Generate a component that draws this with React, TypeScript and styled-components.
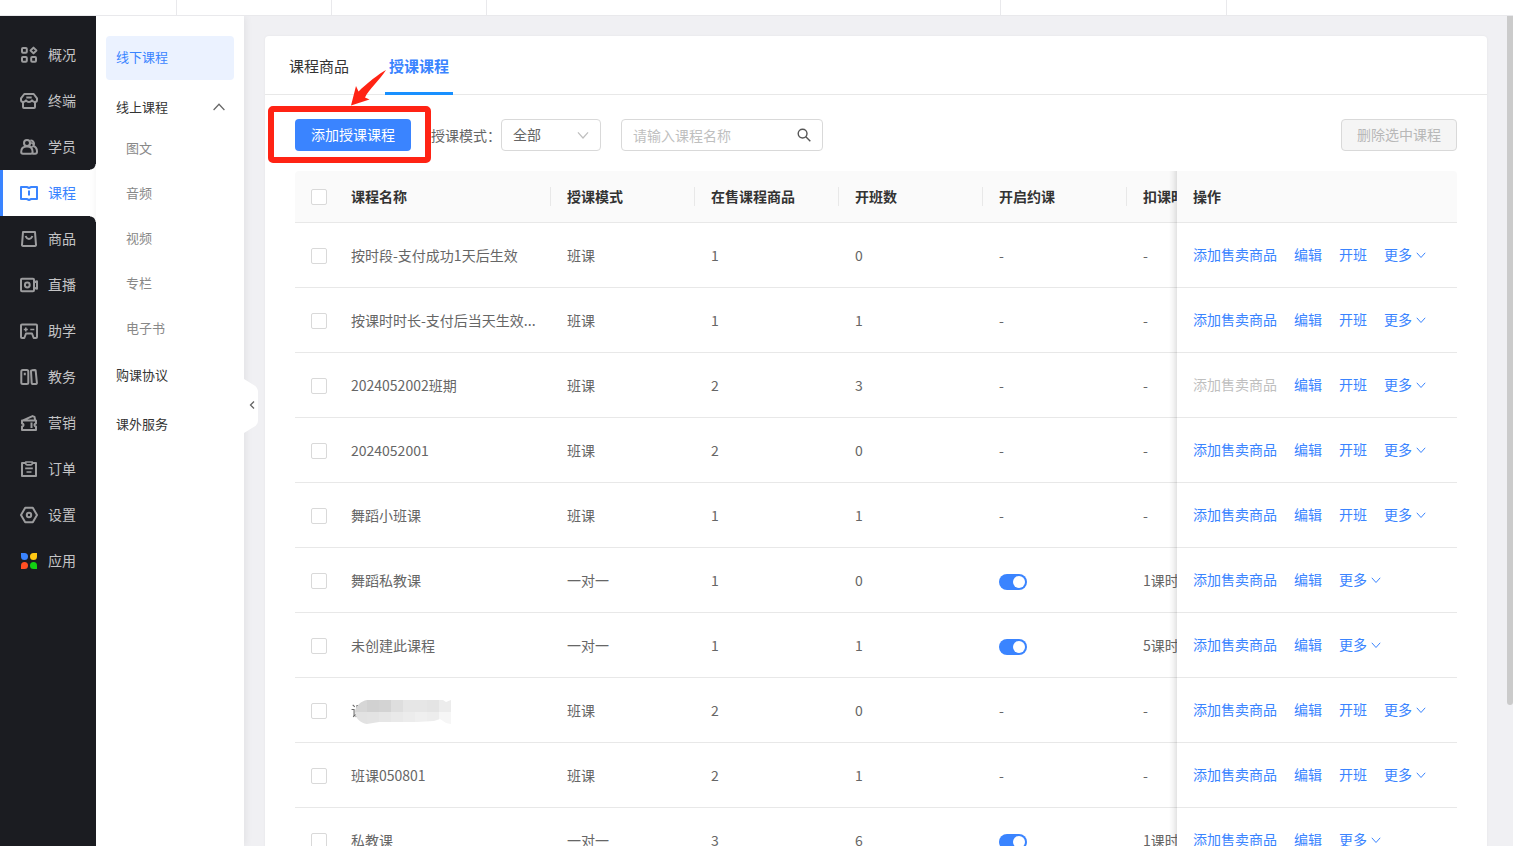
import React, { useState } from "react";
import styled, { createGlobalStyle, css } from "styled-components";

const BLUE = "#3a84ff";

const GlobalStyle = createGlobalStyle`
  *, *::before, *::after { box-sizing: border-box; }
  body {
    margin: 0;
    background: #f0f0f3;
    color: #666;
    font: 14px/22px "Noto Sans CJK SC", "Noto Sans", sans-serif;
  }
  button, input, select { font: inherit; margin: 0; }
  a { color: inherit; text-decoration: none; }
`;

const Page = styled.div`
  display: flex;
  flex-direction: column;
  height: 100vh;
  overflow: hidden;
`;

const TopStrip = styled.div`
  display: flex;
  flex: none;
  height: 16px;
  background: #fff;
  border-bottom: 1px solid #e9e9ec;
`;

const TopCell = styled.div<{ $w: number }>`
  flex: 0 1 ${(p) => p.$w}px;
  border-right: 1px solid #e9e9ec;
`;

const Body = styled.div`
  display: flex;
  flex: 1;
  min-height: 0;
  overflow: hidden;
`;

const Rail = styled.nav`
  flex: none;
  width: 96px;
  padding-top: 16px;
  background: #1b1c21;
`;

const corner = css`
  content: "";
  position: absolute;
  right: 0;
  width: 6px;
  height: 6px;
`;

const RailLink = styled.a<{ $active?: boolean }>`
  position: relative;
  display: flex;
  align-items: center;
  gap: 10px;
  height: 46px;
  padding-left: 20px;
  color: #c4c4c6;

  ${(p) =>
    p.$active &&
    css`
      padding-left: 17px;
      border-left: 3px solid ${BLUE};
      background: #fff;
      color: ${BLUE};
      &::before {
        ${corner}
        top: -6px;
        background: radial-gradient(circle at 0 0, transparent 5px, #fff 6px);
      }
      &::after {
        ${corner}
        bottom: -6px;
        background: radial-gradient(circle at 0 100%, transparent 5px, #fff 6px);
      }
    `}
`;

const RailLabel = styled.span`
  padding-bottom: 2px;
`;

const RailIcon = styled.svg<{ $active?: boolean }>`
  flex: none;
  width: 18px;
  height: 18px;
  fill: none;
  stroke: ${(p) => (p.$active ? BLUE : "#9c9c9e")};
  stroke-width: 2;
  stroke-linejoin: round;
`;

const SubMenu = styled.nav`
  position: relative;
  z-index: 1;
  flex: none;
  width: 148px;
  padding: 20px 10px;
  background: #fff;
  font-size: 13px;
  box-shadow: 1px 0 8px rgba(0, 0, 0, 0.07);
`;

const SubLink = styled.a<{ $active?: boolean }>`
  display: flex;
  align-items: center;
  height: ${(p) => (p.$active ? 44 : 49)}px;
  padding: 0 10px 2px;
  border-radius: 4px;
  color: ${(p) => (p.$active ? BLUE : "#333")};
  background: ${(p) => (p.$active ? "#ebf2ff" : "none")};
`;

const SubGroup = styled.button`
  display: flex;
  align-items: center;
  justify-content: space-between;
  width: 100%;
  height: 46px;
  padding: 8px 9px 0 10px;
  border: 0;
  background: none;
  color: #333;
`;

const SubChild = styled.a`
  display: flex;
  align-items: center;
  height: 45px;
  padding: 0 0 2px 20px;
  color: #888;
`;

const Collapse = styled.button`
  position: absolute;
  top: 363px;
  right: -14px;
  width: 14px;
  height: 54px;
  padding: 0;
  border: 0;
  background: none;
  svg {
    display: block;
  }
`;

const Main = styled.main`
  flex: 1;
  min-width: 0;
  padding: 20px 20px 0 21px;
  overflow: hidden;
`;

const Card = styled.section`
  background: #fff;
  border-radius: 4px;
  box-shadow: 0 0 3px rgba(0, 0, 0, 0.05);
`;

const Tabs = styled.div`
  display: flex;
  gap: 32px;
  padding: 0 20px;
  border-bottom: 1px solid #e8e8e8;
`;

const Tab = styled.button<{ $active?: boolean }>`
  height: 59px;
  margin-bottom: -1px;
  padding: 3px 4px 0;
  border: 0;
  border-bottom: 3px solid ${(p) => (p.$active ? "#1890ff" : "transparent")};
  background: none;
  color: ${(p) => (p.$active ? BLUE : "#333")};
  font-size: 15px;
  font-weight: ${(p) => (p.$active ? 700 : 400)};
`;

const Toolbar = styled.div`
  display: flex;
  align-items: center;
  padding: 24px 30px 20px;
`;

const Highlight = styled.div`
  position: relative;
  margin-right: 20px;
  &::after {
    content: "";
    position: absolute;
    inset: -13px -20px -12px -27px;
    border: 6px solid #ff2314;
    border-radius: 5px;
    pointer-events: none;
  }
`;

const Arrow = styled.svg`
  position: absolute;
  left: 55px;
  top: -50px;
  width: 38px;
  height: 38px;
  pointer-events: none;
`;

const PrimaryButton = styled.button`
  display: block;
  width: 116px;
  height: 32px;
  padding: 0 0 2px;
  border: 0;
  border-radius: 4px;
  background: ${BLUE};
  color: #fff;
`;

const PlainButton = styled.button`
  width: 116px;
  height: 32px;
  margin-left: auto;
  padding: 0 0 2px;
  border: 1px solid #d9d9d9;
  border-radius: 4px;
  background: #f5f5f5;
  color: #b8b8b8;
`;

const SelectBox = styled.span`
  display: grid;
  align-items: center;
  width: 100px;
  margin-right: 20px;
  > * {
    grid-area: 1 / 1;
  }
  svg {
    justify-self: end;
    margin-right: 12px;
    pointer-events: none;
  }
`;

const Select = styled.select`
  appearance: none;
  width: 100%;
  height: 32px;
  padding: 0 11px 2px;
  border: 1px solid #d9d9d9;
  border-radius: 4px;
  background: #fff;
  color: #666;
`;

const Search = styled.div`
  display: flex;
  align-items: center;
  width: 202px;
  height: 32px;
  padding: 0 11px;
  border: 1px solid #d9d9d9;
  border-radius: 4px;
`;

const SearchInput = styled.input`
  flex: 1;
  min-width: 0;
  padding: 0;
  border: 0;
  outline: 0;
  background: none;
  color: #666;
  &::placeholder {
    color: #bfbfbf;
  }
`;

const IconButton = styled.button`
  display: flex;
  padding: 0;
  border: 0;
  background: none;
`;

const TableWrap = styled.div`
  margin: 0 30px;
  overflow-x: auto;
  scrollbar-width: none;
  border-radius: 4px 4px 0 0;
`;

const Table = styled.table`
  width: 100%;
  min-width: 1256px;
  table-layout: fixed;
  border-collapse: separate;
  border-spacing: 0;
`;

const Col = styled.col<{ $w: number }>`
  width: ${(p) => p.$w}px;
`;

const sticky = css`
  position: sticky;
  right: 0;
  &::before {
    content: "";
    position: absolute;
    top: 0;
    bottom: -1px;
    left: -8px;
    width: 8px;
    background: linear-gradient(to left, rgba(0, 0, 0, 0.11), rgba(0, 0, 0, 0.04) 50%, transparent);
  }
`;

const Th = styled.th<{ $rule?: boolean; $fixed?: boolean }>`
  height: 52px;
  padding: 0 16px 2px;
  border-bottom: 1px solid #e8e8e8;
  background: ${(p) =>
    p.$rule
      ? "linear-gradient(#e8e8e8, #e8e8e8) right center / 1px 19px no-repeat #fafafa"
      : "#fafafa"};
  color: #333;
  font-weight: 700;
  text-align: left;
  white-space: nowrap;
  ${(p) => p.$fixed && sticky}
`;

const Td = styled.td<{ $fixed?: boolean }>`
  height: 65px;
  padding: ${(p) => (p.$fixed ? "0 16px 2px" : "0 16px")};
  border-bottom: 1px solid #e8e8e8;
  background: #fff;
  white-space: nowrap;
  ${(p) => p.$fixed && sticky}
`;

const Check = styled.input`
  display: block;
  appearance: none;
  width: 16px;
  height: 16px;
  margin-top: 2px !important;
  border: 1px solid #d9d9d9;
  border-radius: 2px;
  background: #fff;
  &:checked {
    border-color: ${BLUE};
    background: ${BLUE};
  }
`;

const Switch = styled.input`
  display: block;
  appearance: none;
  width: 28px;
  height: 16px;
  margin-top: 3px !important;
  padding: 2px;
  border-radius: 8px;
  background: #bfbfbf;
  &::before {
    content: "";
    display: block;
    width: 12px;
    height: 12px;
    border-radius: 6px;
    background: #fff;
  }
  &:checked {
    background: ${BLUE};
  }
  &:checked::before {
    margin-left: auto;
  }
`;

const Actions = styled.div`
  display: flex;
  gap: 17px;
`;

const ActionLink = styled.a`
  display: flex;
  align-items: center;
  gap: 4px;
  color: ${BLUE};
  svg {
    margin-top: 2px;
  }
`;

const DisabledAction = styled.button`
  padding: 0;
  border: 0;
  background: none;
  color: #bfbfbf;
`;

const Redacted = styled.span`
  position: relative;
  svg {
    position: absolute;
    left: 4px;
    top: 0;
  }
`;

const ScrollTrack = styled.div`
  flex: none;
  width: 6px;
`;

const ScrollThumb = styled.div`
  height: 83%;
  border-radius: 0 0 3px 3px;
  background: #cbcbcb;
`;

type RailItem = { label: string; icon: React.ReactNode };

const RAIL: RailItem[] = [
  {
    label: "概况",
    icon: (
      <>
        <rect x="2" y="2" width="4.8" height="4.8" rx="1" />
        <rect x="2" y="11" width="4.8" height="4.8" rx="1" />
        <rect x="11.2" y="11" width="4.8" height="4.8" rx="1" />
        <path d="M13.5 1.6 16.4 4.5 13.5 7.4 10.6 4.5z" />
      </>
    ),
  },
  {
    label: "终端",
    icon: (
      <>
        <path d="M4.3 2h9.4L17 6.4V8a2 2 0 0 1-2 2c-1.6 0-2.3-.8-3-1.8-.7 1-1.6 1.8-3 1.8s-2.3-.8-3-1.8C5.3 9.2 4.6 10 3 10a2 2 0 0 1-2-2V6.4z" />
        <path d="M3 10v5a1 1 0 0 0 1 1h10a1 1 0 0 0 1-1v-5M6.300 5.500h5.400" />
      </>
    ),
  },
  {
    label: "学员",
    icon: (
      <>
        <circle cx="7" cy="5" r="3" />
        <path d="M10.3 2.700a3 3 0 0 1 2.700 5.100M1.200 14c0-3.500 2.200-5.400 5.800-5.400s5.600 1.900 5.600 5.400c0 1.200-.6 1.800-1.700 1.800H2.900c-1.100 0-1.700-.6-1.700-1.800zM13 7.900c2.600.5 4 2.700 4 5.700 0 1.500-.6 2.200-1.900 2.200h-2.600" />
        <circle cx="11.5" cy="7" r="2" strokeWidth="1.500" />
      </>
    ),
  },
  {
    label: "课程",
    icon: (
      <>
        <path d="M1 3h5.800L9 4l2.200-1H17v12h-5.800L9 16l-2.200-1H1z" />
        <path d="M9 6.500v5" />
      </>
    ),
  },
  {
    label: "商品",
    icon: (
      <>
        <path d="M3 2h12l1 12.800a1 1 0 0 1-1 1.200H3a1 1 0 0 1-1-1.200z" />
        <path d="M5.600 6c.8 2 2 2.900 3.400 2.900s2.600-.9 3.400-2.900" />
      </>
    ),
  },
  {
    label: "直播",
    icon: (
      <>
        <rect x="1" y="2.800" width="13" height="12.400" rx="1" />
        <circle cx="7.300" cy="9" r="2.400" />
        <path d="M14 6.300 17 5.300v7.400l-3-1" />
      </>
    ),
  },
  {
    label: "助学",
    icon: (
      <>
        <path d="M2 2.500h14a1 1 0 0 1 1 1V15a1 1 0 0 1-1 1h-2.300L12 11.500H6L4.300 16H2a1 1 0 0 1-1-1V3.500a1 1 0 0 1 1-1z" />
        <path d="M3.800 7.500h4M5.800 5.500v4M10.300 7.500h4" strokeWidth="1.600" />
      </>
    ),
  },
  {
    label: "教务",
    icon: (
      <>
        <rect x="1.300" y="2" width="7" height="14" rx="1.500" />
        <path d="M4.800 4.800v2.500M12 2.200l2.600-.3a1 1 0 0 1 1.100.9l1.200 12a1 1 0 0 1-.9 1.100l-3.200.2a1 1 0 0 1-1.100-1L11 3.300a1 1 0 0 1 1-1.100z" />
      </>
    ),
  },
  {
    label: "营销",
    icon: (
      <>
        <path d="M2 6.500h14v3a1.500 1.500 0 0 0 0 3V16H2v-3.500a1.500 1.500 0 0 0 0-3zM3 6.300l9.500-4.200 2 .8.700 3.400" />
        <path d="M11.500 8.500v5.500" />
      </>
    ),
  },
  {
    label: "订单",
    icon: (
      <>
        <path d="M5.500 3H2v13h14V3h-3.500" />
        <path d="M5.700 2h6.600v1.500c0 .8-.5 1.300-1.300 1.300H7c-.8 0-1.300-.5-1.300-1.300zM5.200 8.300h7.600M6.500 12h5" strokeWidth="1.700" />
      </>
    ),
  },
  {
    label: "设置",
    icon: (
      <>
        <path d="M5.200 1.800h7.600L17 9l-4.200 7.200H5.200L1 9z" />
        <circle cx="9" cy="9" r="2.200" />
      </>
    ),
  },
  {
    label: "应用",
    icon: (
      <g stroke="none">
        <path d="M1 1h3.500A3.500 3.500 0 1 1 1 4.500z" fill="#3a84ff" />
        <path d="M17 1v3.500A3.500 3.500 0 1 1 13.500 1z" fill="#ffc814" />
        <path d="M1 17v-3.500A3.500 3.500 0 1 1 4.500 17z" fill="#ff4f23" />
        <path d="M17 17h-3.500A3.500 3.500 0 1 1 17 13.500z" fill="#12d012" />
      </g>
    ),
  },
];

const Chevron = ({ size, color, up }: { size: number; color: string; up?: boolean }) => (
  <svg width={size} height={size} viewBox="0 0 10 10" fill="none" stroke={color} strokeWidth="1">
    <path d={up ? "M.5 7.500 5 2.700 9.500 7.500" : "M.8 2.800 5 7.500 9.200 2.800"} />
  </svg>
);

type Row = {
  name: string;
  mode: string;
  sale: number;
  classes: number;
  cost?: string;
  redacted?: boolean;
  saleOff?: boolean;
};

const ROWS: Row[] = [
  { name: "按时段-支付成功1天后生效", mode: "班课", sale: 1, classes: 0 },
  { name: "按课时时长-支付后当天生效...", mode: "班课", sale: 1, classes: 1 },
  { name: "2024052002班期", mode: "班课", sale: 2, classes: 3, saleOff: true },
  { name: "2024052001", mode: "班课", sale: 2, classes: 0 },
  { name: "舞蹈小班课", mode: "班课", sale: 1, classes: 1 },
  { name: "舞蹈私教课", mode: "一对一", sale: 1, classes: 0, cost: "1课时" },
  { name: "未创建此课程", mode: "一对一", sale: 1, classes: 1, cost: "5课时" },
  { name: "课", mode: "班课", sale: 2, classes: 0, redacted: true },
  { name: "班课050801", mode: "班课", sale: 2, classes: 1 },
  { name: "私教课", mode: "一对一", sale: 3, classes: 6, cost: "1课时" },
];

const MOSAIC_TOP = ["#d6d6d6", "#d1d1d1", "#d3d3d3", "#dedede", "#e6e6e6", "#e6e6e6", "#e4e4e4", "#ececec"];
const MOSAIC_BOTTOM = ["#e2e2e2", "#e3e3e3", "#e6e6e6", "#e9e9e9", "#ececec", "#efefef", "#ededed", "#f6f6f6"];

const Mosaic = () => (
  <svg width="96" height="24" viewBox="0 0 96 24">
    <clipPath id="smudge">
      <path d="M12 0h76l3 2 5-2v24l-5-1-6-4-6 2-17 1-38 0-12 2C5 23 0 18 0 11 1 6 6 1 12 0z" />
    </clipPath>
    <g clipPath="url(#smudge)">
      {MOSAIC_TOP.map((c, i) => (
        <rect key={i} x={i * 12} y="0" width="12" height="12" fill={c} />
      ))}
      {MOSAIC_BOTTOM.map((c, i) => (
        <rect key={i} x={i * 12} y="12" width="12" height="12" fill={c} />
      ))}
    </g>
  </svg>
);

function CourseRow({ row }: { row: Row }) {
  const [open, setOpen] = useState(true);
  return (
    <tr>
      <Td>
        <Check type="checkbox" aria-label={row.name} />
      </Td>
      <Td>
        {row.redacted ? (
          <Redacted>
            {row.name}
            <Mosaic />
          </Redacted>
        ) : (
          row.name
        )}
      </Td>
      <Td>{row.mode}</Td>
      <Td>{row.sale}</Td>
      <Td>{row.classes}</Td>
      <Td>
        {row.cost ? (
          <Switch
            type="checkbox"
            role="switch"
            aria-label="开启约课"
            checked={open}
            onChange={() => setOpen(!open)}
          />
        ) : (
          "-"
        )}
      </Td>
      <Td>{row.cost ?? "-"}</Td>
      <Td $fixed>
        <Actions>
          {row.saleOff ? (
            <DisabledAction disabled>添加售卖商品</DisabledAction>
          ) : (
            <ActionLink href="#">添加售卖商品</ActionLink>
          )}
          <ActionLink href="#">编辑</ActionLink>
          {!row.cost && <ActionLink href="#">开班</ActionLink>}
          <ActionLink href="#">
            更多
            <Chevron size={10} color={BLUE} />
          </ActionLink>
        </Actions>
      </Td>
    </tr>
  );
}

export default function App() {
  return (
    <Page>
      <GlobalStyle />
      <TopStrip>
        {[177, 155, 155, 514, 226].map((w, i) => (
          <TopCell key={i} $w={w} />
        ))}
      </TopStrip>
      <Body>
        <Rail>
          {RAIL.map(({ label, icon }) => (
            <RailLink key={label} href="#" $active={label === "课程"}>
              <RailIcon viewBox="0 0 18 18" $active={label === "课程"}>
                {icon}
              </RailIcon>
              <RailLabel>{label}</RailLabel>
            </RailLink>
          ))}
        </Rail>
        <SubMenu>
          <SubLink href="#" $active>
            线下课程
          </SubLink>
          <SubGroup>
            线上课程
            <Chevron size={12} color="#666" up />
          </SubGroup>
          {["图文", "音频", "视频", "专栏", "电子书"].map((t) => (
            <SubChild key={t} href="#">
              {t}
            </SubChild>
          ))}
          <SubLink href="#">购课协议</SubLink>
          <SubLink href="#">课外服务</SubLink>
          <Collapse aria-label="收起菜单">
            <svg width="14" height="54" viewBox="0 0 14 54" fill="none">
              <path d="M0 0 10.500 6.500Q14 9 14 13V41Q14 45 10.500 47.500L0 54z" fill="#fff" />
              <path d="M10 22.500 6.500 26 10 29.500" stroke="#666" strokeWidth="1.300" />
            </svg>
          </Collapse>
        </SubMenu>
        <Main>
          <Card>
            <Tabs role="tablist">
              <Tab role="tab">课程商品</Tab>
              <Tab role="tab" $active>
                授课课程
              </Tab>
            </Tabs>
            <Toolbar>
              <Highlight>
                <PrimaryButton>添加授课课程</PrimaryButton>
                <Arrow viewBox="0 0 38 38">
                  <path d="M36 1C30 4 16 15 8.500 22.500L6 17 1 36.500 19.500 30.500 15 28.500C19 20 29 12 36 1z" fill="#ff2314" />
                </Arrow>
              </Highlight>
              <label htmlFor="mode">授课模式：</label>
              <SelectBox>
                <Select id="mode">
                  <option>全部</option>
                  <option>班课</option>
                  <option>一对一</option>
                </Select>
                <Chevron size={12} color="#bfbfbf" />
              </SelectBox>
              <Search>
                <SearchInput aria-label="课程名称" placeholder="请输入课程名称" />
                <IconButton aria-label="搜索">
                  <svg width="14" height="14" viewBox="0 0 14 14" fill="none" stroke="#555" strokeWidth="1.400">
                    <circle cx="5.600" cy="5.600" r="4.400" />
                    <path d="M8.800 8.800 13.300 13.300" />
                  </svg>
                </IconButton>
              </Search>
              <PlainButton disabled>删除选中课程</PlainButton>
            </Toolbar>
            <TableWrap>
              <Table>
                <colgroup>
                  {[40, 216, 144, 144, 144, 144, 144, 280].map((w, i) => (
                    <Col key={i} $w={w} />
                  ))}
                </colgroup>
                <thead>
                  <tr>
                    <Th>
                      <Check type="checkbox" aria-label="全选" />
                    </Th>
                    <Th $rule>课程名称</Th>
                    <Th $rule>授课模式</Th>
                    <Th $rule>在售课程商品</Th>
                    <Th $rule>开班数</Th>
                    <Th $rule>开启约课</Th>
                    <Th>扣课时</Th>
                    <Th $fixed>操作</Th>
                  </tr>
                </thead>
                <tbody>
                  {ROWS.map((row) => (
                    <CourseRow key={row.name} row={row} />
                  ))}
                </tbody>
              </Table>
            </TableWrap>
          </Card>
        </Main>
        <ScrollTrack>
          <ScrollThumb />
        </ScrollTrack>
      </Body>
    </Page>
  );
}
